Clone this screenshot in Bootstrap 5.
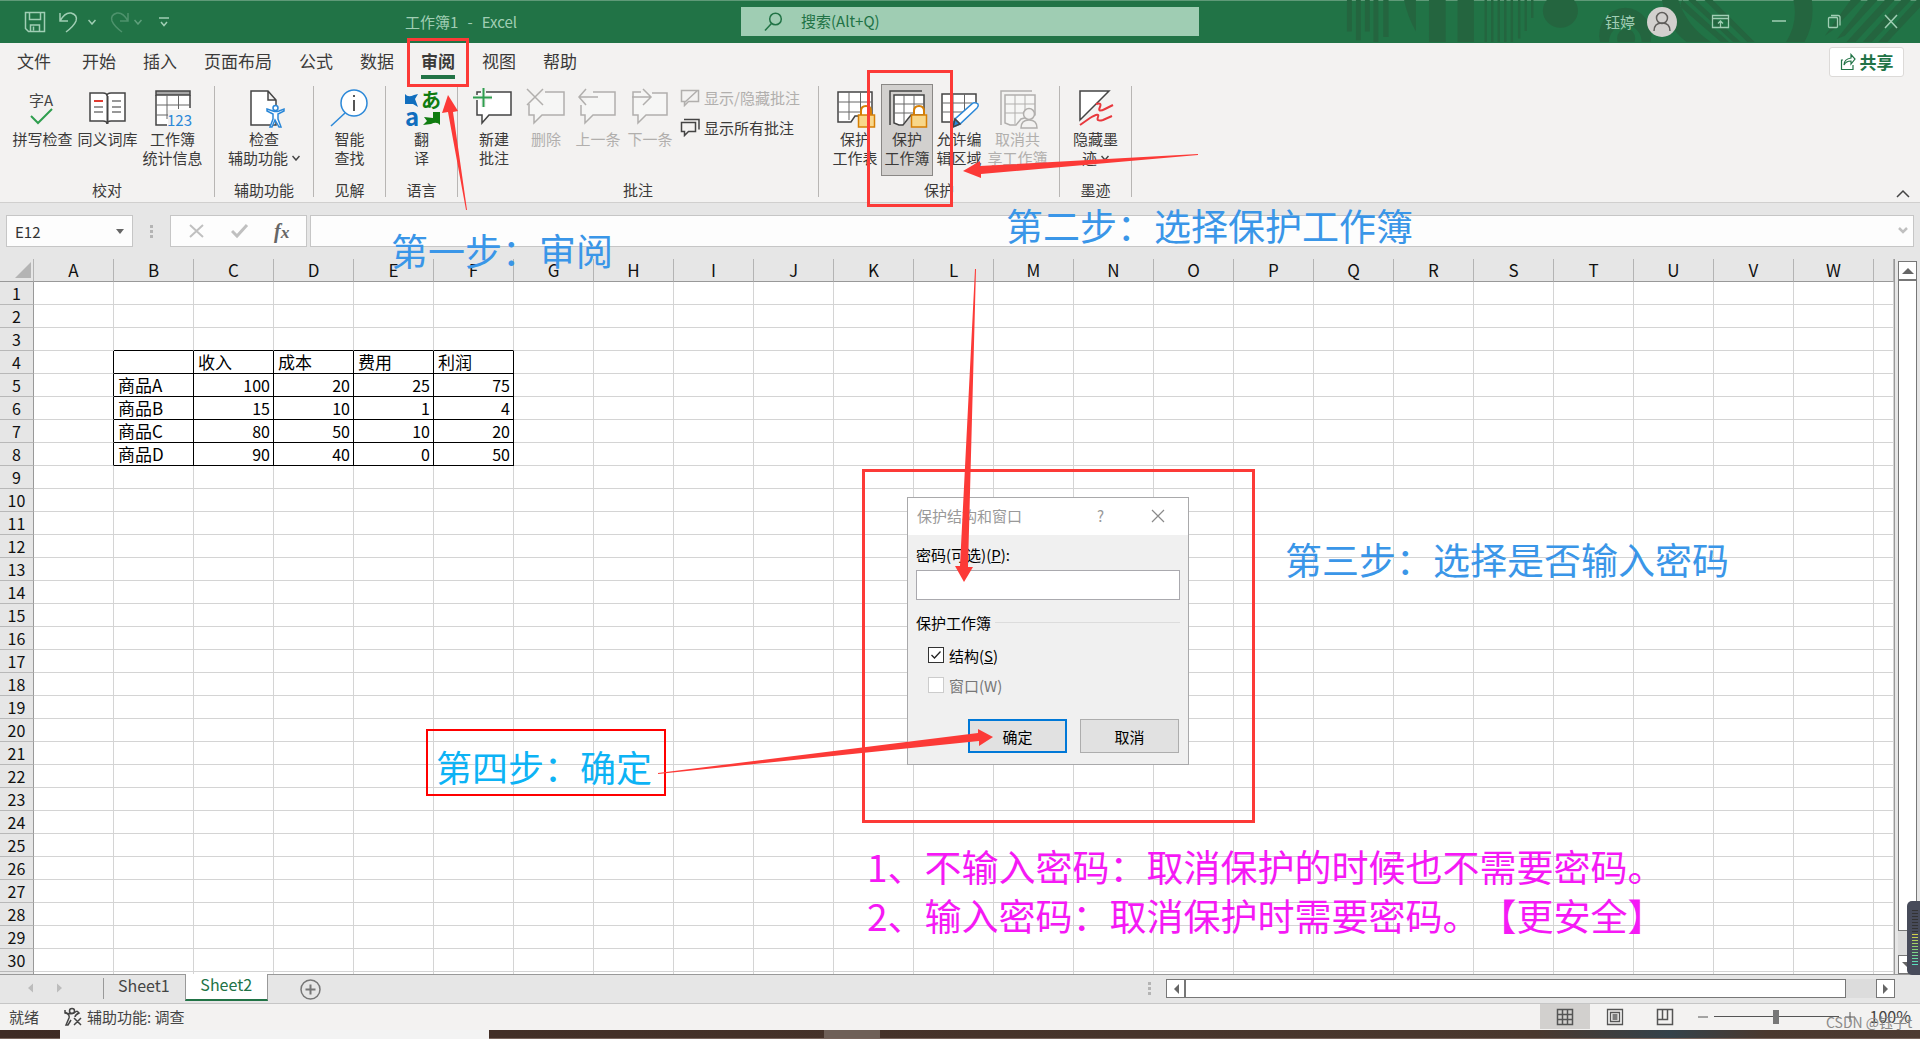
<!DOCTYPE html>
<html lang="zh-CN">
<head>
<meta charset="utf-8">
<meta name="viewport" content="width=device-width, initial-scale=1">
<title>工作簿1 - Excel</title>
<link href="https://cdn.jsdelivr.net/npm/bootstrap@5.3.0/dist/css/bootstrap.min.css" rel="stylesheet">
<style>
body{font-family:"Noto Sans CJK SC","Noto Sans",sans-serif;font-size:15px;line-height:19px;color:#3b3a39;background:#e6e6e6;height:100vh;overflow:hidden}
button{font:inherit;color:inherit;background:none;border:0;padding:0}
svg{display:block;flex:none;fill:none;stroke-width:1.5}
/* title bar */
.titlebar{height:43px;background:#217346;border-top:1px solid #5f9a78;padding-bottom:1px;color:#a0ceb4}
.titlebar>*{position:relative}
.titlebar .deco{position:absolute;right:0;top:0;width:640px;height:42px;fill:#24653f;stroke:none}
.side{flex:1 1 0}
.titlebar svg{stroke:#a0ceb4}
.gap-sm{margin-left:12px}
.gap-md{margin-left:16px}
.gap-lg{margin-left:40px}
.doc-name{margin-right:204px}
.doc-name i{font-style:normal;margin:0 9px}
.search-wrap{width:478px;padding-left:20px}
.search-box{height:29px;background:#9fcdb3}
.search-box svg{stroke:#217346;margin:0 18px 0 22px}
.search-box input{background:none;border:0;padding:0 0 2px;color:#217346;outline:0}
.search-box input::placeholder{color:#217346;opacity:1}
.avatar{width:30px;height:30px;background:#d2d0ce;margin:0 34px 0 12px}
.titlebar .avatar svg{stroke:#605e5c}
.win-close{margin-right:21px}
/* tabs */
.tabs{height:40px;background:#f3f2f1;padding:0 16px 0 17px}
.tabs nav{gap:27px}
.tabs nav a{color:#3b3a39;font-size:17px;line-height:36px;text-decoration:none;height:40px}
.tabs nav a.current{font-weight:700;box-shadow:inset 0 -4px #f3f2f1,inset 0 -8px #217346}
.share-btn{width:75px;height:30px;border:1px solid #dcdad8;border-radius:3px;background:#fff;color:#217346;font-weight:700;font-size:17px;margin-top:4px;padding-bottom:1px}
.share-btn svg{stroke:#217346}
/* ribbon */
.ribbon{height:120px;background:#f3f2f1;border-bottom:1px solid #d0cfce}
.ribbon .sep{width:1px;background:#b8b6b4;margin:3px 0 5px}
.grp{height:119px}
.g-proof{width:214px}
.g-access{width:98px}
.g-narrow{width:71px}
.g-notes{width:360px}
.g-protect{width:240px}
.tools{padding-left:10px}
.grp-name{height:19px;margin-top:4px;text-align:center}
.tool{width:52px;height:92px;margin-top:1px;padding-top:3px;border:1px solid transparent;display:flex;flex-direction:column;align-items:center;white-space:nowrap;text-align:center}
.tool svg{margin-bottom:1px}
.tool.wide{width:65px}
.tool.auto{width:92px}
.tool.on{background:#d2d0ce;border-color:#8a8886}
.off{color:#b1afad}
.ic{stroke:#444;width:40px;height:40px;overflow:visible}
.off .ic{stroke:#b1afad}
.thin{stroke-width:1;stroke:#666}
.off .thin{stroke:#b1afad}
.white{fill:#fff}.off .white{fill:#f6f6f5}
.small-tools{padding:5px 0 0 4px;gap:10px}
.collapse-btn{padding:0 10px 3px 0}
/* formula bar */
.fbar{padding:12px 6px 12px 6px;gap:3px}
.fbox{height:32px;border:1px solid #c6c6c6;background:#fdfdfd}
.fbox input{border:0;background:none;outline:0;padding:0;min-width:0;color:#333}
.name-box{width:127px}
.edit-btns{width:137px}
.fx{font:italic 700 20px "Liberation Serif",serif;color:#666}
.dots{width:3px;height:13px;background:repeating-linear-gradient(#b4b4b4 0 3px,transparent 3px 5px)}
.fbar .dots{margin:0 14px}
/* sheet */
.sheet{flex:1 1 0;min-height:0;border-bottom:1px solid #999}
.gridbox{border-right:1px solid #999;margin-right:3px;overflow:hidden;background:#e6e6e6}
.cells{table-layout:fixed;width:100%;border-collapse:separate;border-spacing:0;color:#222;font-size:16px;line-height:22px}
.cells .c-head{width:34px}
.cells .c-std{width:80px}
.cells th,.cells td{height:23px;padding:0;font-weight:400;white-space:nowrap}
.cells thead th{border-bottom:1px solid #999;border-right:1px solid #b4b4b4;text-align:center;font-size:17px;background:#e6e6e6;color:#111}
.cells tbody th{background:#e6e6e6;border-right:1px solid #999;border-bottom:1px solid #b8b8b8;text-align:center;color:#111}
.cells td{background:#fff;border-right:1px solid #d4d4d4;border-bottom:1px solid #d4d4d4}
.cells td.rb{border-right-color:#000}.cells td.bb{border-bottom-color:#000}
.cells td.word{font-size:17px;padding-left:4px;color:#000}
.cells td.num{text-align:right;padding-right:3px;color:#000}
.corner{display:block;width:0;margin-left:15px;border:8px solid transparent;border-right-color:#b4b4b4;border-bottom-color:#b4b4b4}
.vbar{width:19px;margin:2px 3px 0 0}
.sbtn{width:19px;height:19px;border:1px solid #777;background:#fff;display:flex;align-items:center;justify-content:center}
.sbtn svg,.solid{fill:#666;stroke:none}
.track{background:#dcdcdc}
.hbar .track{width:30px}
.vthumb{height:96.5%;border:1px solid #777;background:#fff}
.hthumb{height:19px;border:1px solid #777;background:#fff;width:661px}
/* sheet tabs */
.sbar{height:29px;border-bottom:1px solid #c6c6c6;background:#e6e6e6}
.sbar .moves{fill:#bcbcbc}
.sbar .bar-line{width:1px;height:21px;background:#999;margin-top:3px}
.sbar .stab{font-size:16px;height:24px;color:#444;padding:0 15px 4px 14px;line-height:20px}
.sbar .stab.cur{background:#fff;color:#217346;border:solid #999;border-width:0 1px;border-bottom:2px solid #217346;margin-top:-1px;height:27px;width:83px;padding:0 0 5px}
.add-sheet{margin:3px 0 0 31px}
.sbar .dots{margin:7px 15px 0 0}
.hbar{margin-right:25px}
/* status bar */
.status{height:26px;background:#f3f2f1;color:#444;padding-bottom:1px}
.status .ready{margin:0 24px 0 9px}
.status .percent{margin:0 9px 0 13px;font-size:16px}
.view-btn{width:50px;height:25px;display:flex;align-items:center;justify-content:center}
.view-btn.on{background:#d2d0ce}
.view-btn svg{stroke:#555}
.zoomer{-webkit-appearance:none;appearance:none;width:125px;height:14px;background:linear-gradient(#555,#555) center/100% 1px no-repeat}
.zoomer::-webkit-slider-thumb{-webkit-appearance:none;width:6px;height:14px;background:#777}
.taskbar{height:9px;background:linear-gradient(90deg,#3e2b24 0,#453229 45%,#4a382e 80%,#34424a 87%,#4a382e 92%,#4d3b32);border-bottom:1px solid #78655d}
.task-light{margin-left:60px;width:429px;background:#f3f3f3;height:9px}
.task-item{margin-left:335px;width:56px;height:8px;background:#6e5f57}
/* dialog window */
.dlg{position:absolute;left:907px;top:497px;width:282px;height:268px;background:#f0f0f0;border:1px solid #a9a9ab;color:#000}
.dlg-head{height:37px;background:#fff;color:#999;padding:0 23px 2px 9px}
.dlg-head .help{margin-right:47px}
.dlg-body{padding:10px 8px 0}
.dlg-body input[type=text]{width:100%;height:30px;border:1px solid #aaa9ae;background:#fff;display:block;margin-top:6px;outline:0}
.dlg-body input[type=checkbox]{-webkit-appearance:none;appearance:none;width:16px;height:16px;margin:0;border:1px solid #333;background:#fff}
.dlg-body input[type=checkbox]:checked{background:#fff url("data:image/svg+xml,%3Csvg xmlns='http://www.w3.org/2000/svg' viewBox='0 0 14 14'%3E%3Cpath d='M2.500 7l3 3 6-6.500' fill='none' stroke='%23222' stroke-width='1.300'/%3E%3C/svg%3E")}
.dlg-body input[type=checkbox]:disabled{border-color:#ccc}
.legend-row{margin:13px 0 13px}
.tick{height:20px;gap:5px;margin:0 0 10px 12px}
.tick.dim{color:#777}
.rule{height:1px;background:#dcdcdc}
.dlg-foot{gap:13px;margin-top:24px;padding-right:1px}
.dbtn{width:99px;height:34px;background:#e1e1e1;border:1px solid #adadad}
.dbtn.main{border:2px solid #0078d7}
/* tutorial marks laid over the window */
.marks{position:absolute;left:0;top:0;width:1920px;height:1039px;pointer-events:none}
.marks svg{position:absolute;left:0;top:0;fill:#fc3a37;stroke:none}
.note{position:absolute;font-size:37px;line-height:49px;white-space:nowrap;color:#3a96e8;margin:0;text-spacing-trim:space-all;font-feature-settings:"chws" 0}
.frame{position:absolute;border:3px solid #fc3a37}
.f1{left:407px;top:38px;width:62px;height:49px}
.f2{left:867px;top:70px;width:86px;height:137px}
.f3{left:862px;top:469px;width:393px;height:354px}
.f4{left:426px;top:729px;width:240px;height:67px;border:2px solid #f00}
.n1{left:391px;top:226px}
.n2{left:1006px;top:201px}
.n3{left:1285px;top:535px}
.n4{left:436px;top:742px;font-size:36px;color:#0db3f5}
.n5{left:867px;top:842px;color:#f519f5}
.meter{position:absolute;left:1907px;top:901px;width:13px;height:74px;background:#474b5a;border-radius:5px 0 0 5px}
.meter div{position:absolute;right:2px;top:9px;bottom:8px;width:6px;background:repeating-linear-gradient(transparent 0 1px,#474b5a 1px 3px),linear-gradient(#333 0,#333 42%,#d6d24a 43%,#8fd070 65%,#4fe0c8)}
.wm{position:absolute;left:1826px;top:1013px;font-size:14px;color:#8b8a89}
</style>
<script src="https://cdn.jsdelivr.net/npm/bootstrap@5.3.0/dist/js/bootstrap.bundle.min.js"></script>
</head>
<body class="d-flex flex-column">

<header class="titlebar d-flex align-items-center flex-shrink-0">
  <svg class="deco" viewBox="0 0 1568 129" preserveAspectRatio="none">
    <path d="M164 0h12v97h-12zM186 0h12v124h-12zM208 0h12v97h-12zM229 0h12v129h-12zM253 0h13v114h-13zM304 0h29v97Q312 50 304 0zM365 0h41v129h-41zM435 0h40v129h-40zM501 0h6v129h-6zM517 0h6v129h-6zM533 0h6v129h-6zM549 0h6v129h-6zM565 0h6v129h-6zM583 0h6v118h-6zM599 0h6v95h-6zM615 0h6v55h-6z"/>
    <ellipse cx="687" cy="33" rx="43" ry="52"/>
    <path d="M784 129a64 84 0 1 1 124 0h-22a40 52 0 1 0-80 0z"/><ellipse cx="848" cy="118" rx="22" ry="30"/>
    <path d="M936 0h40q20 80 80 129h-60Q945 80 936 0zM980 20l100 109h20L985 0zM1000 0l110 129h18L1018 0zM1040 0l105 129h18L1060 0zM1258 0h45q8 70-18 129h-45q30-60 18-129zM1398 0h26L1355 92l-20 18zM1440 0h24l-80 110-20 10zM1482 0h24l-96 129h-22zM1522 0h24l-96 129h-22zM1560 0h8v22l-80 107h-22z"/>
  </svg>
  <div class="side d-flex align-items-center">
    <svg class="ms-4" width="22" height="22"><path d="M1.500 1.500h19v19h-16l-3-3zM5.500 1.500v7h11v-7M6.500 20v-6h9v6M9.500 15.500v4"/></svg>
    <svg class="gap-sm" width="22" height="22"><path d="M2 2v8h8M2 10Q7 1 13 2q7 2 5 8-2 5-10 11"/></svg>
    <svg class="ms-2" width="8" height="6"><path d="M.5 1l3.500 4 3.500-4"/></svg>
    <svg class="gap-sm" width="22" height="22" opacity=".35"><path d="M20 2v8h-8M20 10Q15 1 9 2q-7 2-5 8 2 5 10 11"/></svg>
    <svg class="ms-1" width="8" height="6" opacity=".5"><path d="M.5 1l3.500 4 3.500-4"/></svg>
    <svg class="gap-md" width="12" height="12"><path d="M1 2h10M3 6l3 3.500L9 6"/></svg>
    <span class="doc-name ms-auto">工作簿1<i>-</i>Excel</span>
  </div>
  <div class="search-wrap">
    <label class="search-box d-flex align-items-center">
      <svg width="20" height="20"><circle cx="12.500" cy="7" r="5.800"/><path d="M8.500 11.500L2 18.500"/></svg>
      <input class="flex-grow-1" type="search" placeholder="搜索(Alt+Q)" aria-label="搜索">
    </label>
  </div>
  <div class="side d-flex align-items-center justify-content-end">
    <span>钰婷</span>
    <span class="avatar rounded-circle d-flex align-items-center justify-content-center"><svg width="20" height="22"><circle cx="10" cy="7" r="5.500"/><path d="M2 20q0-8 8-8t8 8"/></svg></span>
    <button aria-label="功能区显示选项"><svg width="20" height="16"><path d="M1.500 1.500h16v12h-16zM1.500 4.500h16M9.500 13V7M7 9.500L9.500 7l2.500 2.500" stroke-width="1.300"/></svg></button>
    <button aria-label="最小化" class="gap-lg"><svg width="16" height="16"><path d="M1 7h14"/></svg></button>
    <button aria-label="还原" class="gap-lg"><svg width="16" height="16"><path d="M1.500 4.500q0-1 1-1h7q1 0 1 1v8q0 1-1 1h-7q-1 0-1-1zM4 1.500h7q2 0 2 2v8" stroke-width="1.300"/></svg></button>
    <button aria-label="关闭" class="gap-lg win-close"><svg width="16" height="16"><path d="M2 1l12 13M14 1L2 14"/></svg></button>
  </div>
</header>

<div class="tabs d-flex justify-content-between align-items-start flex-shrink-0">
  <nav class="d-flex">
    <a href="#" class="me-1">文件</a><a href="#">开始</a><a href="#">插入</a><a href="#">页面布局</a><a href="#">公式</a><a href="#">数据</a><a href="#" class="current">审阅</a><a href="#">视图</a><a href="#">帮助</a>
  </nav>
  <button class="share-btn d-flex align-items-center justify-content-center gap-1"><svg width="16" height="18"><path d="M3 7H1.500v9.500H13V12M4 12q0-6 7-7V1.500L15 6l-4 5V8q-5 0-7 4z" stroke-width="1.200"/></svg>共享</button>
</div>

<main class="ribbon d-flex flex-shrink-0">
  <section class="grp g-proof">
    <div class="tools d-flex">
      <button class="tool wide"><svg class="ic"><text x="6" y="18" font-size="15" fill="#444" stroke="none">字A</text><path d="M8 28l7 7L29 21" stroke="#2f9e4f" stroke-width="2"/></svg>拼写检查</button>
      <button class="tool wide"><svg class="ic"><path class="white" d="M2 5h13q4 0 4 3 0-3 4-3h14v28H23q-4 0-4 3 0-3-4-3H2z"/><path d="M19.500 8v28" stroke-width="2"/><path d="M6 13h9" stroke="#e03c32" stroke-width="2"/><path d="M6 19h9M6 24h9M24 13h9M24 19h9M24 24h9" stroke="#777"/></svg>同义词库</button>
      <button class="tool wide"><svg class="ic"><path class="white" stroke="none" d="M3 4h34v18H15v15H3z"/><path fill="#a6a6a6" d="M3 3h34v4H3z"/><path d="M3 7v30h11M37 7v13"/><path class="thin" d="M3 17h34M3 27h12M14 7v24M25.500 7v14"/><text x="14" y="38" font-size="15" fill="#2b88d8" stroke="none">123</text></svg>工作簿<br>统计信息</button>
    </div>
    <div class="grp-name">校对</div>
  </section>
  <div class="sep"></div>
  <section class="grp g-access d-flex flex-column align-items-center">
    <button class="tool auto"><svg class="ic"><path class="white" d="M7 3h17l8 9v25H7zM24 3v9h8"/><path d="M23 21l6 2q3 1 6 0l5-2v2l-6 3v5l3 8h-2l-4-7-3 7h-2l3-8v-5l-6-3z" fill="#fff" stroke="#2b88d8"/><circle cx="31.500" cy="20" r="2.500" fill="#fff" stroke="#2b88d8"/></svg>检查<br><span class="d-flex align-items-center gap-1">辅助功能<svg class="m-0" width="8" height="6" stroke="#444"><path d="M.5 1l3.500 4 3.500-4"/></svg></span></button>
    <div class="grp-name">辅助功能</div>
  </section>
  <div class="sep"></div>
  <section class="grp g-narrow d-flex flex-column align-items-center">
    <button class="tool"><svg class="ic"><g stroke="#2b88d8"><circle class="white" cx="24" cy="15" r="13"/><path d="M15 25L1 38"/></g><path d="M24 12v11M24 7v2" stroke-width="1.800"/></svg>智能<br>查找</button>
    <div class="grp-name">见解</div>
  </section>
  <div class="sep"></div>
  <section class="grp g-narrow d-flex flex-column align-items-center">
    <button class="tool"><svg class="ic"><path d="M3 6q3 4 9 1l4-1-3 5 3 8-5-3H3z" fill="#106ebe" stroke="none"/><path d="M38 37q-3-4-9-1l-8 1 4-4-3-4 9 1V24h7z" fill="#107c10" stroke="none"/><g stroke="none" font-weight="700"><text x="3" y="38" font-size="24" fill="#106ebe">a</text><text x="19" y="20" font-size="20" fill="#107c10">あ</text></g></svg>翻<br>译</button>
    <div class="grp-name">语言</div>
  </section>
  <div class="sep"></div>
  <section class="grp g-notes">
    <div class="tools d-flex">
      <button class="tool"><svg class="ic"><path class="white" d="M3 4h34v23H15l-7 8v-8H3z"/><path d="M-1 9.500h19M9.500 0v19" stroke="#f3f2f1" stroke-width="5"/><path d="M-1 9.500h19M9.500 0v19" stroke="#2f9e4f" stroke-width="2"/></svg>新建<br>批注</button>
      <button class="tool off"><svg class="ic"><path class="white" d="M19 4h19v23H16l-8 8v-8H3V16"/><path d="M1 1l16 16M17 1L1 17"/></svg>删除</button>
      <button class="tool off"><svg class="ic"><path class="white" d="M15 4h22v23H15l-8 8v-8H3V17"/><path d="M1 9h19M8 1L1 9l7 8"/></svg>上一条</button>
      <button class="tool off"><svg class="ic"><path class="white" d="M22 5h15v22H16l-8 8v-8H3V4h8"/><path d="M2 9h19M13 1l8 8-8 8"/></svg>下一条</button>
      <div class="small-tools d-flex flex-column align-items-start">
        <button class="off d-flex align-items-center gap-1"><svg width="20" height="19" stroke="#b1afad"><path d="M1.500 2.500h17v11h-10l-4 4v-4h-3zM17 3L4 15"/></svg>显示/隐藏批注</button>
        <button class="d-flex align-items-center gap-1"><svg width="20" height="20" stroke="#444"><path d="M1.500 5.500h14v9h-7l-4 4v-4h-3zM4 2.500h15v10"/></svg>显示所有批注</button>
      </div>
    </div>
    <div class="grp-name">批注</div>
  </section>
  <div class="sep"></div>
  <section class="grp g-protect">
    <div class="tools d-flex">
      <button class="tool"><svg class="ic"><path class="white" d="M3 4h34v24H20l-4 6H3z"/><path class="thin" d="M3 14h34M3 24h24M14 4v28M25.500 4v22"/><path d="M26 28v-5q0-5 5-5t5 5v5" stroke="#d67f05" stroke-width="2"/><path d="M23.500 27h16v12h-16z" fill="#f8d78a" stroke="#d67f05"/></svg>保护<br>工作表</button>
      <button class="tool on"><svg class="ic"><path d="M3 37V3h32"/><path class="white" d="M7 7h30v20H24l-8 10h-4l-5-2z"/><path class="thin" d="M7 16h30M7 25h20M17 7v28M27 7v18"/><path d="M27 28v-5q0-5 5-5t5 5v5" stroke="#d67f05" stroke-width="2"/><path d="M24.500 27h15v12h-15z" fill="#f8d78a" stroke="#d67f05"/></svg>保护<br>工作簿</button>
      <button class="tool"><svg class="ic"><path class="white" d="M3 6h34v12L20 34H3z"/><path class="thin" d="M3 15h30M3 24h24M14 6v28M25.500 6v20"/><path d="M14 39l2-8 18-16q3-1 5 1 1 2-1 4L21 36zM16 31l5 5" fill="#fff" stroke="#2b88d8"/><path d="M14 39l2-8 5 5z" fill="#2b88d8"/></svg>允许编<br>辑区域</button>
      <button class="tool wide off"><svg class="ic"><path d="M3 37V3h31"/><path class="white" d="M7 7h30v20l-14 4-5 6h-6l-5-2z"/><path class="thin" d="M7 16h30M7 25h30M17 7v29M27 7v20"/><circle cx="31" cy="26" r="5.500" fill="#f3f2f1"/><path d="M23 40q0-8 8-8t8 8z" fill="#f3f2f1"/></svg>取消共<br>享工作簿</button>
    </div>
    <div class="grp-name">保护</div>
  </section>
  <div class="sep"></div>
  <section class="grp g-narrow d-flex flex-column align-items-center">
    <button class="tool"><svg class="ic"><path class="white" d="M4 3h29L4 32z"/><path d="M20 16q6-2 4 3-3 6 5 2l8-4M4 37l10-7q10-6 8-1-2 5 5 3l9-4" stroke="#e8383d" stroke-width="2"/></svg>隐藏墨<br><span class="d-flex align-items-center gap-1">迹<svg class="m-0" width="8" height="6" stroke="#444"><path d="M.5 1l3.500 4 3.500-4"/></svg></span></button>
    <div class="grp-name">墨迹</div>
  </section>
  <div class="sep"></div>
  <button class="collapse-btn ms-auto align-self-end" aria-label="折叠功能区"><svg width="14" height="10" stroke="#444"><path d="M1 8l6-6 6 6"/></svg></button>
</main>

<div class="fbar d-flex align-items-center flex-shrink-0">
  <div class="fbox name-box d-flex align-items-center"><input class="flex-grow-1 ms-1 ps-1" aria-label="名称框" value="E12"><svg class="solid me-2" width="8" height="5"><path d="M0 0h8L4 5z"/></svg></div>
  <div class="dots"></div>
  <div class="fbox edit-btns d-flex align-items-center justify-content-around px-1">
    <button aria-label="取消输入"><svg width="18" height="18" stroke="#c0c0c0"><path d="M2 3l13 12M15 3L2 15" stroke-width="2"/></svg></button>
    <button aria-label="确认输入"><svg width="18" height="18" stroke="#c0c0c0"><path d="M1 9l5 5L16 3" stroke-width="3"/></svg></button>
    <button aria-label="插入函数" class="fx">f<small>x</small></button>
  </div>
  <div class="fbox d-flex align-items-center flex-grow-1"><input class="flex-grow-1 ms-2" aria-label="编辑栏"><svg class="me-1" width="12" height="8" stroke="#c0c0c0"><path d="M2 1l4 4 4-4" stroke-width="2.500"/></svg></div>
</div>

<div class="sheet d-flex overflow-hidden">
  <div class="gridbox flex-grow-1">
    <table class="cells" id="cells"></table>
  </div>
  <div class="vbar d-flex flex-column">
    <button class="sbtn" aria-label="向上"><svg width="12" height="6"><path d="M0 6h12L6 0z"/></svg></button>
    <div class="track flex-grow-1"><div class="vthumb"></div></div>
    <button class="sbtn" aria-label="向下"><svg width="12" height="6"><path d="M0 0h12L6 6z"/></svg></button>
  </div>
</div>

<div class="sbar d-flex align-items-start flex-shrink-0">
  <svg class="solid moves" width="103" height="28"><path d="M33 8.500v9l-5-4.500zM57 8.500v9l5-4.500z"/></svg>
  <div class="bar-line"></div>
  <button class="stab">Sheet1</button>
  <button class="stab cur">Sheet2</button>
  <button aria-label="新工作表" class="add-sheet"><svg width="23" height="23" stroke="#777"><circle cx="11.500" cy="11.500" r="9.500"/><path d="M6.500 11.500h10M11.500 6.500v10" stroke-width="2"/></svg></button>
  <div class="flex-grow-1"></div>
  <div class="dots"></div>
  <div class="hbar d-flex pt-1">
    <button class="sbtn" aria-label="向左"><svg width="6" height="10"><path d="M6 0v10L1 5z"/></svg></button>
    <div class="hthumb"></div><div class="track"></div>
    <button class="sbtn" aria-label="向右"><svg width="6" height="10"><path d="M0 0v10l5-5z"/></svg></button>
  </div>
</div>

<footer class="status d-flex align-items-center flex-shrink-0">
  <span class="ready">就绪</span>
  <svg width="20" height="20" stroke="#444"><path d="M2 5q6 4 12-1M2 3v3q5 1 4 5l-3 7h2l3-5M14 4l2 2q-4 2-4 4M11 11l7 7M18 11l-7 7"/><circle cx="9" cy="4" r="2.500"/></svg>
  <span class="ms-1">辅助功能: 调查</span>
  <button class="view-btn on ms-auto" aria-label="普通"><svg width="18" height="18"><path d="M1.500 1.500h15v15h-15zM1.500 6.500h15M1.500 11.500h15M6.500 1.500v15M11.500 1.500v15"/></svg></button>
  <button class="view-btn" aria-label="页面布局"><svg width="18" height="18"><path d="M1.500 1.500h15v15h-15zM4.500 4.500h9v9h-9zM6.500 7h5M6.500 9h5M6.500 11h5" stroke-width="1.300"/></svg></button>
  <button class="view-btn" aria-label="分页预览"><svg width="18" height="18"><path d="M1.500 1.500h15v15h-15zM1.500 11.500h10V1.500M6.500 1.500v10"/></svg></button>
  <button aria-label="缩小" class="me-1"><svg width="20" height="12" stroke="#555"><path d="M8 6h10" stroke-width="1"/></svg></button>
  <input class="zoomer" type="range" min="10" max="190" value="100" aria-label="显示比例">
  <button aria-label="放大" class="ms-1"><svg width="14" height="12" stroke="#555"><path d="M2 6h10M7 1v10" stroke-width="1"/></svg></button>
  <span class="percent">100%</span>
</footer>
<div class="taskbar d-flex flex-shrink-0"><div class="task-light"></div><div class="task-item"></div></div>

<form class="dlg" aria-label="保护结构和窗口">
  <div class="dlg-head d-flex align-items-center">
    <span class="me-auto">保护结构和窗口</span>
    <button type="button" aria-label="帮助" class="help">?</button>
    <button type="button" aria-label="关闭"><svg width="14" height="14" stroke="#8a8a8a"><path d="M1 1l12 12M13 1L1 13" stroke-width="1.200"/></svg></button>
  </div>
  <div class="dlg-body">
    <label class="d-block" for="pwd">密码(可选)(<u>P</u>):</label>
    <input type="text" id="pwd">
    <div class="legend-row d-flex align-items-center gap-1">保护工作簿<span class="rule flex-grow-1"></span></div>
    <div class="tick d-flex align-items-center"><input type="checkbox" id="st" checked><label for="st">结构(<u>S</u>)</label></div>
    <div class="tick dim d-flex align-items-center"><input type="checkbox" id="wi" disabled><label for="wi">窗口(W)</label></div>
    <div class="dlg-foot d-flex justify-content-end">
      <button type="button" class="dbtn main">确定</button><button type="button" class="dbtn">取消</button>
    </div>
  </div>
</form>

<div class="marks">
  <div class="frame f1"></div><div class="frame f2"></div><div class="frame f3"></div><div class="frame f4"></div>
  <p class="note n1">第一步：审阅</p>
  <p class="note n2">第二步：选择保护工作簿</p>
  <p class="note n3">第三步：选择是否输入密码</p>
  <p class="note n4">第四步：确定</p>
  <p class="note n5">1、不输入密码：取消保护的时候也不需要密码。<br>2、输入密码：取消保护时需要密码。【更安全】</p>
  <svg width="1920" height="1039">
    <path d="M448 95l10 16-5 1 14 98h-1L448 112l-6 1z"/>
    <path d="M963 171l17-10v5l218-12v1L981 174v4z"/>
    <path d="M976 269l-8 298h5l-9 15-9-16h5l15-297z"/>
    <path d="M658 773l320-40v-4l15 8-14 9v-5l-321 33z"/>
  </svg>
  <div class="meter"><div></div></div>
  <div class="wm">CSDN @钰子t</div>
</div>

<script>
// Cell contents, keyed by row then by column letter
const values = {
  4: {C:'收入', D:'成本', E:'费用', F:'利润'},
  5: {B:'商品A', C:100, D:20, E:25, F:75},
  6: {B:'商品B', C:15, D:10, E:1, F:4},
  7: {B:'商品C', C:80, D:50, E:10, F:20},
  8: {B:'商品D', C:90, D:40, E:0, F:50}
};
const cols = [...'ABCDEFGHIJKLMNOPQRSTUVW', ''];
let html = '<colgroup><col class="c-head">' + cols.map(c => c ? '<col class="c-std">' : '<col>').join('') + '</colgroup>';
html += '<thead><tr><th><span class="corner"></span></th>' + cols.map(c => `<th scope="col">${c}</th>`).join('') + '</tr></thead><tbody>';
for (let r = 1; r <= 31; r++) {
  html += `<tr><th scope="row">${r <= 30 ? r : ''}</th>`;
  cols.forEach((c, i) => {
    const v = values[r] && values[r][c];
    const cls = [];
    if (r >= 4 && r <= 8 && i <= 5) cls.push('rb');
    if (r >= 3 && r <= 8 && i >= 1 && i <= 5) cls.push('bb');
    if (v !== undefined) cls.push(typeof v === 'number' ? 'num' : 'word');
    html += `<td class="${cls.join(' ')}">${v ?? ''}</td>`;
  });
  html += '</tr>';
}
document.getElementById('cells').innerHTML = html + '</tbody>';
</script>
</body>
</html>
